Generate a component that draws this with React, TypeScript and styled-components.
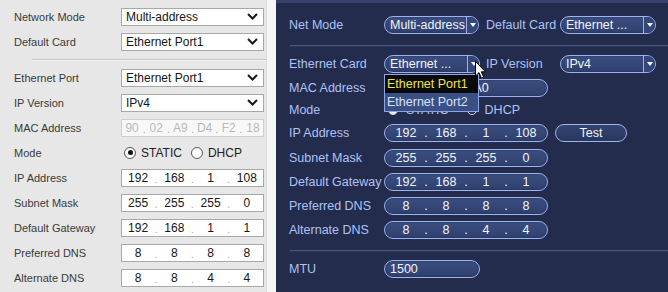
import React from "react";
import styled, { createGlobalStyle } from "styled-components";

const Global = createGlobalStyle`
  html, body { margin: 0; padding: 0; background: #ffffff; }
  * { box-sizing: border-box; }
`;

const Page = styled.div`
  width: 668px;
  height: 292px;
  display: flex;
  overflow: hidden;
  font-family: "Liberation Sans", Arial, sans-serif;
`;

/* ---------- light (web) panel ---------- */
const LightPanel = styled.div`
  width: 266px;
  background: #e7e7e7;
  padding-top: 4px;
  display: flex;
  flex-direction: column;
`;

const Gap = styled.div`
  width: 10px;
  background: #f6f6f6;
  border-left: 1px solid #dcdcdc;
`;

const LRow = styled.div`
  height: 25px;
  display: flex;
  align-items: center;
  padding-left: 14px;
`;

const LLabel = styled.div`
  width: 107px;
  font-size: 11px;
  color: #3a3a3a;
`;

const LBox = styled.div<{ $disabled?: boolean }>`
  width: 143px;
  height: 18px;
  background: ${(p) => (p.$disabled ? "#f8f8f8" : "#ffffff")};
  border: 1px solid ${(p) => (p.$disabled ? "#cfcfcf" : "#a8a8a8")};
  display: flex;
  align-items: center;
  font-size: 12px;
  color: ${(p) => (p.$disabled ? "#b8b8b8" : "#151515")};
`;

const LSelectText = styled.span`
  flex: 1;
  padding-left: 4px;
`;

const LChevron = styled.svg`
  width: 11px;
  height: 7px;
  margin-right: 5px;
`;

const LSeg = styled.span`
  flex: 1;
  text-align: center;
  line-height: 14px;
`;

const LDot = styled.span`
  width: 4px;
  font-size: 10px;
  color: #9a9a9a;
  align-self: flex-end;
  line-height: 12px;
  text-align: center;
`;

const LDivider = styled.div`
  height: 2px;
  margin: 5px 0 4px 32px;
  border-top: 1px solid #c6c6c6;
  border-bottom: 1px solid #f5f5f5;
`;

const RadioGroup = styled.div`
  display: flex;
  align-items: center;
  font-size: 12px;
  color: #222;
  padding-left: 3px;
`;

const LRadio = styled.span<{ $on?: boolean }>`
  width: 12px;
  height: 12px;
  border-radius: 50%;
  border: 1px solid #555;
  background: #fff;
  display: inline-flex;
  align-items: center;
  justify-content: center;
  margin-right: 5px;
  &::after {
    content: "";
    width: 5px;
    height: 5px;
    border-radius: 50%;
    background: ${(p) => (p.$on ? "#111" : "transparent")};
  }
`;

const LRadioText = styled.span<{ $gap?: number }>`
  margin-right: ${(p) => p.$gap ?? 0}px;
`;

/* ---------- dark (local GUI) panel ---------- */
const DarkPanel = styled.div`
  flex: 1;
  background: #232c4d;
  border-top: 3px solid #35426a;
  padding-top: 10px;
  display: flex;
  flex-direction: column;
  color: #aec2f7;
  font-size: 12.5px;
`;

const DRow = styled.div<{ $h?: number }>`
  height: ${(p) => p.$h ?? 24}px;
  display: flex;
  align-items: center;
  padding-left: 13px;
  position: relative;
`;

const DLabel = styled.div<{ $w?: number; $ml?: number }>`
  width: ${(p) => p.$w ?? 95}px;
  margin-left: ${(p) => p.$ml ?? 0}px;
  white-space: nowrap;
`;

const DDivider = styled.div`
  height: 2px;
  margin: 8px 0 5px 14px;
  border-top: 1px solid #4a5780;
  border-bottom: 1px solid #2b3558;
`;

const Pill = styled.div<{ $w: number }>`
  width: ${(p) => p.$w}px;
  height: 18px;
  border: 1.5px solid #9fb3ef;
  border-radius: 9px;
  background: linear-gradient(#3b4e80, #2e406e);
  box-shadow: inset 0 0 2px rgba(0, 0, 0, 0.4);
  display: flex;
  align-items: center;
  color: #f2f4fa;
  font-size: 12.5px;
  position: relative;
`;

const PillText = styled.span`
  flex: 1;
  padding-left: 5px;
  white-space: nowrap;
  overflow: hidden;
`;

const ArrowCap = styled.span`
  width: 12px;
  height: 100%;
  border-left: 1px solid #9fb3ef;
  border-radius: 0 8px 8px 0;
  background: #34467a;
  display: flex;
  align-items: center;
  justify-content: center;
  &::after {
    content: "";
    border-left: 3px solid transparent;
    border-right: 3px solid transparent;
    border-top: 4px solid #ffffff;
  }
`;

const DSeg = styled.span`
  flex: 1;
  text-align: center;
`;

const DDot = styled.span`
  width: 4px;
  text-align: center;
`;

const IpInner = styled.div`
  flex: 1;
  display: flex;
  padding: 0 3px;
`;

const TestButton = styled.div`
  width: 72px;
  height: 18px;
  margin-left: 7px;
  border: 1.5px solid #9fb3ef;
  border-radius: 9px;
  background: linear-gradient(#33446f, #283760);
  color: #f2f4fa;
  display: flex;
  align-items: center;
  justify-content: center;
  font-size: 12.5px;
`;

const SelectWrap = styled.div`
  position: relative;
`;

const Menu = styled.div`
  position: absolute;
  left: 0;
  top: 19px;
  width: 95px;
  border: 1px solid #8fa4e4;
  background: #3a5084;
  z-index: 5;
  display: flex;
  flex-direction: column;
`;

const MenuItem = styled.div<{ $active?: boolean }>`
  height: 18px;
  line-height: 18px;
  padding-left: 2px;
  font-size: 12.5px;
  white-space: nowrap;
  background: ${(p) => (p.$active ? "#0a0a0a" : "transparent")};
  color: ${(p) => (p.$active ? "#f2e640" : "#d8e2fb")};
`;

const Cursor = styled.svg`
  position: absolute;
  left: 91px;
  top: 6px;
  width: 11px;
  height: 18px;
  z-index: 6;
`;

const DRadio = styled.span<{ $on?: boolean }>`
  width: 10px;
  height: 10px;
  border-radius: 50%;
  border: 1.5px solid #c9d5f7;
  background: ${(p) => (p.$on ? "#f0f3fb" : "transparent")};
  margin: 0 8px 0 4px;
`;

const DRadioText = styled.span<{ $gap?: number }>`
  margin-right: ${(p) => p.$gap ?? 0}px;
`;

const DRadioGroup = styled.div`
  display: flex;
  align-items: center;
`;

const chevron = (
  <LChevron viewBox="0 0 11 7">
    <polyline points="1,1 5.5,5.5 10,1" fill="none" stroke="#1a1a1a" strokeWidth="2" />
  </LChevron>
);

const LSelect = ({ value }: { value: string }) => (
  <LBox>
    <LSelectText>{value}</LSelectText>
    {chevron}
  </LBox>
);

const LIp = ({ parts, disabled }: { parts: string[]; disabled?: boolean }) => (
  <LBox $disabled={disabled}>
    {parts.map((p, i) => (
      <React.Fragment key={i}>
        {i > 0 && <LDot>.</LDot>}
        <LSeg>{p}</LSeg>
      </React.Fragment>
    ))}
  </LBox>
);

const DSelect = ({ value, w = 95 }: { value: string; w?: number }) => (
  <Pill $w={w}>
    <PillText>{value}</PillText>
    <ArrowCap />
  </Pill>
);

const DIp = ({ parts }: { parts: string[] }) => (
  <Pill $w={164}>
    <IpInner>
      {parts.map((p, i) => (
        <React.Fragment key={i}>
          {i > 0 && <DDot>.</DDot>}
          <DSeg>{p}</DSeg>
        </React.Fragment>
      ))}
    </IpInner>
  </Pill>
);

export default function App() {
  return (
    <>
      <Global />
      <Page>
        <LightPanel>
          <LRow>
            <LLabel>Network Mode</LLabel>
            <LSelect value="Multi-address" />
          </LRow>
          <LRow>
            <LLabel>Default Card</LLabel>
            <LSelect value="Ethernet Port1" />
          </LRow>
          <LDivider />
          <LRow>
            <LLabel>Ethernet Port</LLabel>
            <LSelect value="Ethernet Port1" />
          </LRow>
          <LRow>
            <LLabel>IP Version</LLabel>
            <LSelect value="IPv4" />
          </LRow>
          <LRow>
            <LLabel>MAC Address</LLabel>
            <LIp disabled parts={["90", "02", "A9", "D4", "F2", "18"]} />
          </LRow>
          <LRow>
            <LLabel>Mode</LLabel>
            <RadioGroup>
              <LRadio $on />
              <LRadioText $gap={9}>STATIC</LRadioText>
              <LRadio />
              <LRadioText>DHCP</LRadioText>
            </RadioGroup>
          </LRow>
          <LRow>
            <LLabel>IP Address</LLabel>
            <LIp parts={["192", "168", "1", "108"]} />
          </LRow>
          <LRow>
            <LLabel>Subnet Mask</LLabel>
            <LIp parts={["255", "255", "255", "0"]} />
          </LRow>
          <LRow>
            <LLabel>Default Gateway</LLabel>
            <LIp parts={["192", "168", "1", "1"]} />
          </LRow>
          <LRow>
            <LLabel>Preferred DNS</LLabel>
            <LIp parts={["8", "8", "8", "8"]} />
          </LRow>
          <LRow>
            <LLabel>Alternate DNS</LLabel>
            <LIp parts={["8", "8", "4", "4"]} />
          </LRow>
        </LightPanel>
        <Gap />
        <DarkPanel>
          <DRow>
            <DLabel>Net Mode</DLabel>
            <DSelect value="Multi-address" />
            <DLabel $w={74} $ml={7}>Default Card</DLabel>
            <DSelect value="Ethernet ..." w={96} />
          </DRow>
          <DDivider />
          <DRow>
            <DLabel>Ethernet Card</DLabel>
            <SelectWrap>
              <DSelect value="Ethernet ..." w={96} />
              <Menu>
                <MenuItem $active>Ethernet Port1</MenuItem>
                <MenuItem>Ethernet Port2</MenuItem>
              </Menu>
              <Cursor viewBox="0 0 11 18">
                <path
                  d="M0.5 0.5 L0.5 15 L4 11.6 L6.4 17 L8.6 16 L6.3 10.8 L10.5 10.8 Z"
                  fill="#ffffff"
                  stroke="#000000"
                  strokeWidth="1"
                  strokeLinejoin="round"
                />
              </Cursor>
            </SelectWrap>
            <DLabel $w={74} $ml={6}>IP Version</DLabel>
            <DSelect value="IPv4" w={96} />
          </DRow>
          <DRow>
            <DLabel>MAC Address</DLabel>
            <Pill $w={164}>
              <PillText>90:02:a9:d4:f2:A0</PillText>
            </Pill>
          </DRow>
          <DRow $h={20}>
            <DLabel>Mode</DLabel>
            <DRadioGroup>
              <DRadio $on />
              <DRadioText $gap={14}>STATIC</DRadioText>
              <DRadio />
              <DRadioText>DHCP</DRadioText>
            </DRadioGroup>
          </DRow>
          <DRow $h={26}>
            <DLabel>IP Address</DLabel>
            <DIp parts={["192", "168", "1", "108"]} />
            <TestButton>Test</TestButton>
          </DRow>
          <DRow>
            <DLabel>Subnet Mask</DLabel>
            <DIp parts={["255", "255", "255", "0"]} />
          </DRow>
          <DRow>
            <DLabel>Default Gateway</DLabel>
            <DIp parts={["192", "168", "1", "1"]} />
          </DRow>
          <DRow>
            <DLabel>Preferred DNS</DLabel>
            <DIp parts={["8", "8", "8", "8"]} />
          </DRow>
          <DRow>
            <DLabel>Alternate DNS</DLabel>
            <DIp parts={["8", "8", "4", "4"]} />
          </DRow>
          <DDivider />
          <DRow>
            <DLabel>MTU</DLabel>
            <Pill $w={96}>
              <PillText>1500</PillText>
            </Pill>
          </DRow>
        </DarkPanel>
      </Page>
    </>
  );
}
